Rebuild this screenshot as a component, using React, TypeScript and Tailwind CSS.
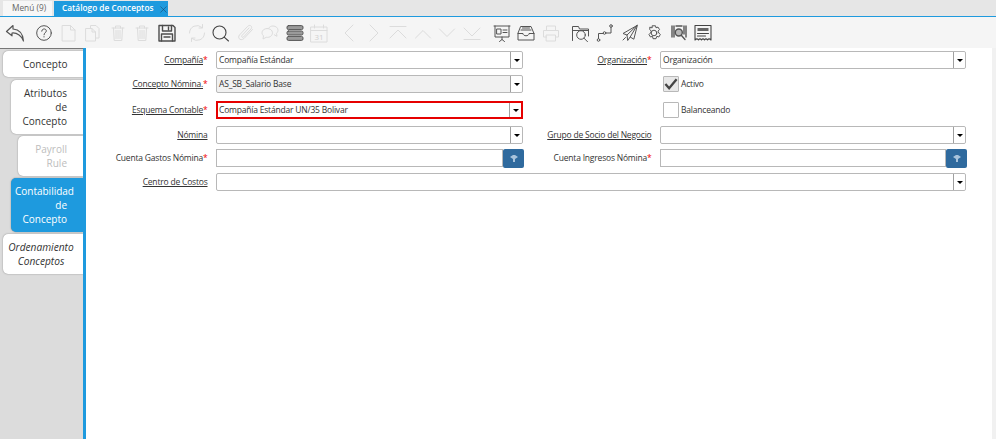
import React from "react";
import { X } from "lucide-react";

const D = "#dcdcdc";
const K = "#555555";

function Ico({ children, color = K, sw = 1 }: { children: React.ReactNode; color?: string; sw?: number }) {
  return (
    <svg width={20} height={20} viewBox="0 0 20 20" fill="none" stroke={color} strokeWidth={sw} strokeLinecap="round" strokeLinejoin="round" className="shrink-0">
      {children}
    </svg>
  );
}

const TRASH = (
  <Ico color={D}>
    <path d="M4 5h12M7.500 5V3h5v2M5.500 5l.7 12.500h7.600L14.500 5M8 7.500v8M10 7.500v8M12 7.500v8" />
  </Ico>
);

const ICONS: (React.ReactNode | null)[] = [
  <Ico sw={1.2}><path d="M8 2.500 1.500 8.500 7 12.800V10c5-.5 10 3 11.500 8C18 11 14 6.500 8 6z" /></Ico>,
  <Ico><circle cx="10" cy="10" r="7.300" /><path d="M7.700 8.200c0-3 4.600-3 4.600-.3 0 1.800-2.300 1.800-2.300 3.900M10 13.600v.4" /></Ico>,
  <Ico color={D}><path d="M3.500 2.500h8l4.500 4.500v11H3.500zM11.500 2.500V7H16" /></Ico>,
  <Ico color={D}><path d="M7.500 5V2.500h5.500l3 3V15H13M3 5.500h6l3.500 3.500v9H3zM9 5.500V9h3.500" /></Ico>,
  TRASH,
  TRASH,
  <Ico sw={1.400} color="#4d4d4d"><path d="M2 2.500h14l2 2v13.500H2z" /><path d="M5.500 2.500v5.500h9V2.500M11.500 4v2.500M4.500 18v-7h11v7M7 14h6" /></Ico>,
  null,
  <Ico color={D}><path d="M2.500 10A7.500 7.500 0 0 1 15 4.500M15.500 1.500v3.500H12M17.500 10A7.500 7.500 0 0 1 5 15.500M4.500 18.500V15H8" /></Ico>,
  <Ico color="#444" sw={1.100}><circle cx="8.500" cy="9.500" r="6.500" /><path d="M13.200 14.200 17.500 18" /></Ico>,
  <Ico color={D}><path d="M16.500 6.500 8 15.500c-3.500 3-7-.5-4.500-3.500L11.500 3.500c2.500-2.500 5.500 0 3.500 2.500L7.500 14c-1 1-2.500 0-1.500-1.500L13 5" /></Ico>,
  <Ico color={D}><path d="M7 5.500c-3 0-5 2-5 4.300 0 1.300.7 2.300 1.500 3L3 16l3.200-1.700c3.800.5 6.300-1.800 6.300-4.500S10 5.500 7 5.500zM8.500 5.300C9.500 3.800 11 3 13 3c3 0 5 2 5 4.300 0 1.300-.7 2.300-1.500 3l.5 3-2.700-1.500" /></Ico>,
  <Ico color="#555" sw={1}><rect x="2" y="2.600" width="16" height="4" rx="1.500" fill="#9a9a9a" /><rect x="2" y="8" width="16" height="4" rx="1.500" fill="#9a9a9a" /><rect x="2" y="13.400" width="16" height="4" rx="1.500" fill="#9a9a9a" /></Ico>,
  <Ico color={D}><path d="M2 4h16v15H2zM2 7.500h16M5.500 2v3M14.500 2v3" /><text x="10" y="16.500" fontSize="8" textAnchor="middle" fill="#d0d0d0" stroke="none" fontFamily="Open Sans, sans-serif">31</text></Ico>,
  null,
  <Ico color={D}><path d="M14 2 6 10l8 8" /></Ico>,
  <Ico color={D}><path d="M6 2l8 8-8 8" /></Ico>,
  <Ico color={D}><path d="M2 3.500h16M2 15l8-8 8 8" /></Ico>,
  <Ico color={D}><path d="M2.500 15l7.500-7.500 7.500 7.500" /></Ico>,
  <Ico color={D}><path d="M2.500 6l7.500 7.500L17.500 6" /></Ico>,
  <Ico color={D}><path d="M2 5l8 8 8-8M2 16.500h16" /></Ico>,
  null,
  <Ico><path d="M2 3h16M3 3v11h14V3M10 14v2.500M7.500 18.500l2.500-2 2.500 2" /><path d="M5 6h4v5H5zM11 7h4M11 9.500h4" /></Ico>,
  <Ico><path d="M5 3.500h10l3 7V17H2v-6.500zM2 10.500h5c0 3 6 3 6 0h5M5 7h10M6.500 5h7" /></Ico>,
  <Ico color={D}><path d="M5.500 7.500V3h9v4.500M5.500 14H2.500V7.500h15V14h-3M5.500 12h9v6h-9z" /></Ico>,
  null,
  <Ico><path d="M1.500 17.500v-14h6l1 2.500h9v7M1.500 7.500h16" /><circle cx="10" cy="12" r="4.300" /><path d="M13 15.200l3.500 3.500" /></Ico>,
  <Ico><circle cx="3.500" cy="17" r="1.300" /><circle cx="9.500" cy="10" r="1.300" /><circle cx="16" cy="3" r="1.300" /><path d="M3.500 15.500V10.500h4.500M11 10h5V4.500" /></Ico>,
  <Ico><path d="M17 2.500 3 10.500l4 1.500.7 5.500 2.500-3.500 3.300 2zM17 2.500 7 12M17 2.500 10.200 14" /><path d="M3 17l2.500-2.500" /></Ico>,
  <Ico><path d="M8.500 2.800h3l.5 2 2-.7 1.500 2.500-1.500 1.500.8 1.900 1.500 1.500-1.500 2.500-2-.7-.8 2.400h-3l-.5-2.400-2 .7-1.500-2.500 1.500-1.500.8-1.900-1.500-1.500L5.800 4.100l2 .7z" /><circle cx="10" cy="10" r="2.800" /></Ico>,
  <Ico sw={1.400}><path d="M3 3v11M5 3v11M15 3v8M17 3v11M7 3h6" /><circle cx="9.800" cy="9.500" r="3.500" fill="#b8b8b8" /><path d="M12.500 12.500l3.500 4" /></Ico>,
  <Ico color="#444" sw={1.100}><path d="M2 2.500h16v14.500c-1.500-1.500-2.500-1.500-3.500 0-1-1.500-2-1.500-3 0-1-1.500-2-1.500-3 0-1-1.500-2-1.500-3 0-1-1.500-2-1.500-3.500 0z" /><rect x="4.500" y="5" width="11" height="3" fill="#666" stroke="none" /><path d="M4.500 10.500h11M4.500 13h8" /></Ico>,
];

function Toolbar() {
  return (
    <div className="h-[31px] bg-[#f5f5f5] flex items-center pl-[2px] pt-[1px]">
      {ICONS.map((node, i) =>
        node === null ? (
          <span key={i} className="w-[5.500px] shrink-0" />
        ) : (
          <span key={i} className={`${i === 0 ? "w-[30px]" : "w-[24.500px]"} shrink-0 flex ${i === 0 ? "justify-start pl-[2.500px]" : "justify-center"}`}>
            {node}
          </span>
        )
      )}
    </div>
  );
}

function Tab({ children, ml, h, mt, cls }: { children: React.ReactNode; ml: string; h: string; mt: string; cls: string }) {
  return (
    <div className={`${ml} ${h} ${mt} ${cls} flex flex-col justify-center rounded-l-[5px] shadow-[0_0_1.500px_#777] leading-[14px]`}>
      {children}
    </div>
  );
}

function Label({ text, star, underline = true }: { text: string; star?: boolean; underline?: boolean }) {
  return (
    <div className="h-[18px] flex justify-end items-center text-[8.500px] tracking-[-0.2px] text-[#333] leading-none pr-[8.500px] whitespace-nowrap">
      <span className={underline ? "underline" : ""}>{text}</span>
      {star && <span className="text-[#f00000]">*</span>}
    </div>
  );
}

function Select({ value, bg = "bg-white", red, span }: { value?: string; bg?: string; red?: boolean; span?: boolean }) {
  return (
    <div className={`${span ? "col-span-3" : ""} h-[18px] flex items-center ${bg} ${red ? "border-2 border-[#e60000]" : "border border-[#b8b8b8] rounded-[2px]"} text-[#333] text-[8.500px] tracking-[-0.2px]`}>
      <span className={`flex-1 ${red ? "pl-[1px]" : "pl-[2px]"} truncate`}>{value}</span>
      <span className="w-[12px] h-full bg-white border-l border-[#a0a0a0] flex items-center justify-center rounded-r-[2px]">
        <span className="w-0 h-0 border-x-[3px] border-x-transparent border-t-[3px] border-t-black" />
      </span>
    </div>
  );
}

function Lookup() {
  return (
    <div className="h-[18px] flex items-center -mr-[1px]">
      <div className="flex-1 h-full bg-white border border-[#b8b8b8]" />
      <span className="w-[21px] h-[19px] bg-[#2f6a9e] rounded-[2px] flex items-center justify-center">
        <svg width="8" height="7" viewBox="0 0 8 7" fill="#a8c3dc"><path d="M0 2 3 0v4zM8 2 5 0v4z" /><rect x="3" y="0" width="2" height="7" /></svg>
      </span>
    </div>
  );
}

function Check({ on, label }: { on?: boolean; label: string }) {
  return (
    <div className="flex items-center h-[18px] pl-[3px] text-[8.500px] tracking-[-0.2px] text-[#333]">
      <span className={`w-[16px] h-[16px] border border-[#b8b8b8] rounded-[1px] flex items-center justify-center ${on ? "bg-[#e8e8e8]" : "bg-white"}`}>
        {on && <svg width="15" height="13" viewBox="0 0 15 13" fill="none" stroke="#444" strokeWidth="2.500"><path d="M1.500 6 5.500 10.500 13.500 1" /></svg>}
      </span>
      <span className="ml-[2px]">{label}</span>
    </div>
  );
}

export default function App() {
  return (
    <div className="w-[996px] h-[439px] overflow-hidden bg-white flex flex-col font-['Open_Sans','Noto_Sans',sans-serif]">
      <div className="h-[16px] bg-[#e6e6e6] flex items-end pl-[3px] gap-[2px] text-[8.300px] leading-none">
        <div className="h-[15px] w-[49px] bg-[#f7f7f7] text-[#666] flex items-center pl-[9px]">Menú (9)</div>
        <div className="h-[15px] w-[114px] bg-[#1e9ade] text-white font-semibold flex items-center pl-[8px] relative">
          Catálogo de Conceptos
          <X size={11} strokeWidth={1.100} color="#1b3a55" className="absolute right-[-1px] top-[3px]" />
        </div>
      </div>
      <div className="h-[1px] bg-[#1e9ade]" />
      <Toolbar />
      <div className="flex-1 flex min-h-0">
        <div className="w-[83px] bg-[#dcdcdc] flex flex-col border-t border-[#777] pt-[2px] text-[10px] text-right">
          <Tab ml="ml-[3px]" h="h-[26px]" mt="mt-0" cls="bg-white text-[#333] pr-[15.500px]"><span>Concepto</span></Tab>
          <Tab ml="ml-[11px]" h="h-[54px]" mt="mt-[3px]" cls="bg-white text-[#333] pr-[16px]"><span>Atributos</span><span>de</span><span>Concepto</span></Tab>
          <Tab ml="ml-[18px]" h="h-[40px]" mt="mt-[2px]" cls="bg-white text-[#bdbdbd] pr-[16px]"><span>Payroll</span><span>Rule</span></Tab>
          <Tab ml="ml-[11px]" h="h-[54px]" mt="mt-[2px]" cls="bg-[#1e9ade] text-white pr-[16px]"><span className="-mr-[7px]">Contabilidad</span><span>de</span><span>Concepto</span></Tab>
          <Tab ml="ml-[3px]" h="h-[40px]" mt="mt-[2px]" cls="bg-white text-[#333] italic text-center text-[10.200px] pr-[4px]"><span>Ordenamiento</span><span>Conceptos</span></Tab>
        </div>
        <div className="w-[3px] bg-[#1e9ade]" />
        <div className="flex-1 pt-[3px]">
          <div className="grid grid-cols-[130px_307px_137px_306px] grid-rows-[24px_26px_25px_23px_24px_18px] items-start">
            <Label text="Compañía" star />
            <Select value="Compañía Estándar" />
            <Label text="Organización" star />
            <Select value="Organización" />

            <Label text="Concepto Nómina." star />
            <Select value="AS_SB_Salario Base" bg="bg-[#f1f1f1]" />
            <div />
            <Check on label="Activo" />

            <Label text="Esquema Contable" star />
            <Select value="Compañía Estándar UN/35 Bolivar" red />
            <div />
            <Check label="Balanceando" />

            <Label text="Nómina" />
            <Select />
            <Label text="Grupo de Socio del Negocio" />
            <Select />

            <Label text="Cuenta Gastos Nómina" star underline={false} />
            <Lookup />
            <Label text="Cuenta Ingresos Nómina" star underline={false} />
            <Lookup />

            <Label text="Centro de Costos" />
            <Select span />
          </div>
        </div>
        <div className="w-[4px] bg-[#f1f1f1]" />
      </div>
    </div>
  );
}
